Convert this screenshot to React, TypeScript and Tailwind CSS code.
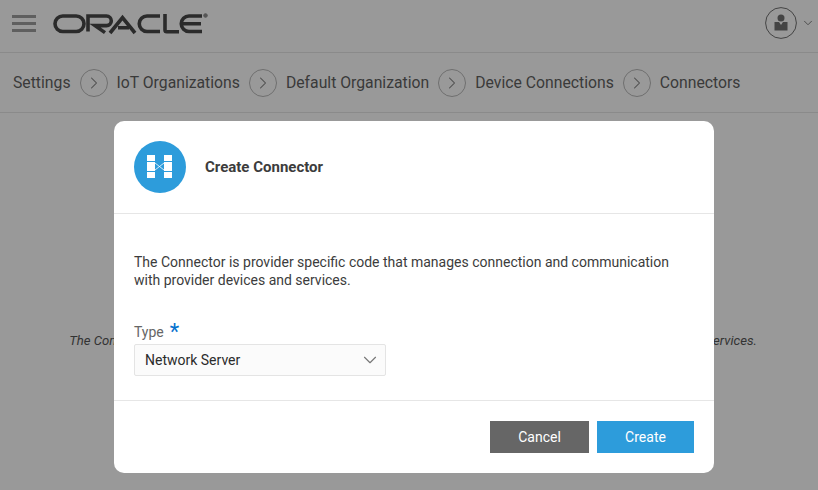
import React from 'react';
import { ChevronDown, ChevronRight } from 'lucide-react';

const crumbs = ['Settings', 'IoT Organizations', 'Default Organization', 'Device Connections', 'Connectors'];

const OracleLogo = () => (
  <svg width="156" height="22" viewBox="0 0 156 22" fill="none" stroke="#2b2b2b" strokeWidth="3.6">
    <rect x="2" y="3" width="29" height="15.5" rx="7.75" />
    <path d="M35 18.5V3h18.5a4.4 4.4 0 0 1 0 9.6H42l10 7" />
    <path d="M57 20 69.5 4.5 82 20M65 14.8h11" />
    <path d="M107 3H94a7.75 7.75 0 0 0 0 15.5h13" />
    <path d="M112 1v16a1.8 1.8 0 0 0 1.8 1.8H126" />
    <path d="M149 3h-13a7.75 7.75 0 0 0 0 15.5h13M129.5 10.8H148" />
    <circle cx="152.5" cy="2.5" r="1.8" stroke="#555" strokeWidth="1" fill="#555" />
  </svg>
);

const ConnectorIcon = () => (
  <svg width="52" height="52" viewBox="0 0 52 52">
    <circle cx="26" cy="26" r="26" fill="#2d9cdb" />
    <path fill="#fff" d="M13 14h8v6h-8zM13 21h8v9h-8zM13 31h8v6h-8zM30 14h8v6h-8zM30 21h8v9h-8zM30 31h8v6h-8z" />
    <path stroke="#fff" strokeWidth="0.8" d="M21 22 30 29M21 29 30 22" fill="none" />
  </svg>
);

const UserIcon = () => (
  <svg width="32" height="32" viewBox="0 0 32 32">
    <circle cx="16" cy="16" r="15.400" fill="none" stroke="#444" strokeWidth="1" />
    <circle cx="16" cy="11" r="3.500" fill="#444" />
    <path fill="#444" d="M9.500 15h4.500l2 3 2-3h4.500v8.500h-13z" />
  </svg>
);

export default function App() {
  return (
    <div className="relative w-[818px] h-[490px] overflow-hidden bg-[#999999] font-['Roboto',sans-serif]">
      <header className="h-[53px] flex items-center pl-3 pr-[3px] pb-[6px] border-b border-[#8a8a8a]">
        <div className="w-6 flex flex-col gap-[4px]">
          <span className="h-[3px] bg-[#5f5f5f]" />
          <span className="h-[3px] bg-[#5f5f5f]" />
          <span className="h-[3px] bg-[#5f5f5f]" />
        </div>
        <div className="ml-[17px] mt-[2px]">
          <OracleLogo />
        </div>
        <div className="ml-auto flex items-center gap-[4px]">
          <UserIcon />
          <ChevronDown className="w-[14px] h-[14px] text-[#444]" strokeWidth={1.500} />
        </div>
      </header>

      <nav className="h-[60px] flex items-center pl-[13px] border-b border-[#8a8a8a] text-[15.750px] text-[#3a3a3a]">
        {crumbs.map((label, i) => (
          <React.Fragment key={label}>
            {i > 0 && (
              <span className="w-7 h-7 mx-[9px] rounded-full border border-[#6f6f6f] flex items-center justify-center">
                <ChevronRight className="w-5 h-5 text-[#4a4a4a]" strokeWidth={1.250} />
              </span>
            )}
            <span>{label}</span>
          </React.Fragment>
        ))}
      </nav>

      <p className="mt-[218px] pl-[8px] text-center text-[13.140px] italic text-[#333]">
        The Connector is provider specific code that manages connection and communication with provider devices and services.
      </p>

      <div className="absolute inset-0 pl-[114px] pt-[121px]">
        <div className="w-[600px] h-[352px] bg-white rounded-[10px] flex flex-col">
          <div className="h-[93px] flex items-center px-5 gap-[19px] border-b border-[#e6e6e6]">
            <ConnectorIcon />
            <h1 className="text-[15px] font-bold text-[#3c3c3c]">Create Connector</h1>
          </div>
          <div className="h-[187px] px-5 pt-[39px] border-b border-[#e6e6e6]">
            <p className="text-[14px] leading-[18px] text-[#3c3c3c]">
              The Connector is provider specific code that manages connection and communication with provider devices and services.
            </p>
            <label className="mt-[32px] flex items-center text-[14px] text-[#666] h-[22px]">
              Type<span className="ml-[6px] text-[22px] leading-none text-[#0572ce]">*</span>
            </label>
            <div className="mt-[1px] w-[252px] h-8 flex items-center justify-between pl-[10px] pr-[4px] bg-[#fbfbfb] border border-[#e4e4e4] rounded-[2px] text-[14px] text-[#2b2b2b]">
              <span>Network Server</span>
              <ChevronDown className="w-[22px] h-[22px] text-[#777]" strokeWidth={1.250} />
            </div>
          </div>
          <div className="flex-1 flex justify-end gap-2 px-5 pt-5">
            <button className="w-[99px] h-8 bg-[#666666] text-white text-[14px]">Cancel</button>
            <button className="w-[97px] h-8 bg-[#2d9cdb] text-white text-[14px]">Create</button>
          </div>
        </div>
      </div>
    </div>
  );
}
